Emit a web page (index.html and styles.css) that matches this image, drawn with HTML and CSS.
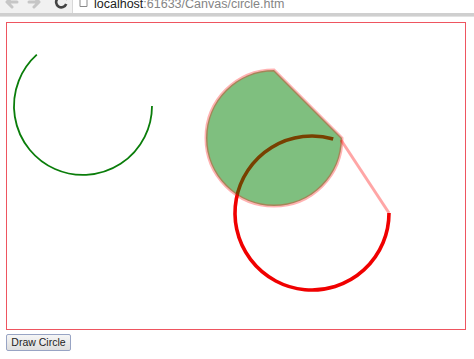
FILE: index.html
```html
<!DOCTYPE html>
<html>
<head>
<meta charset="utf-8">
<link rel="stylesheet" href="styles.css">
</head>
<body>
<div class="chrome">
  <div class="nav">
    <svg class="ico back" width="14" height="20" viewBox="0 0 14 20"><path d="M12 9 H4 M7 4 L2 9 L7 14" fill="none" stroke="#c6c6c6" stroke-width="3" stroke-linecap="round" stroke-linejoin="round"/></svg>
    <svg class="ico fwd" width="14" height="20" viewBox="0 0 14 20"><path d="M2 9 H10 M7 4 L12 9 L7 14" fill="none" stroke="#c6c6c6" stroke-width="3" stroke-linecap="round" stroke-linejoin="round"/></svg>
    <svg class="ico reload" width="14" height="20" viewBox="0 0 14 20"><path d="M11.5 6 A5.2 5.2 0 1 0 12.2 11" fill="none" stroke="#444" stroke-width="2.6"/><path d="M9 2.5 L13.2 3 L12.7 7.5 Z" fill="#444"/></svg>
  </div>
  <div class="address">
    <svg class="doc" width="9" height="20" viewBox="0 0 9 20"><path d="M1 4 H5.5 L8 6.5 V13.5 H1 Z" fill="#fff" stroke="#8a8a8a" stroke-width="1"/></svg>
    <span class="host">localhost</span><span class="rest">:61633/Canvas/circle.htm</span>
  </div>
</div>
<div class="page">
  <div class="canvas">
    <svg width="458" height="306" viewBox="0 0 458 306">
      <g transform="translate(-7 -23)">
        <path d="M152 106 A69 69 0 1 1 36.8 54.7" fill="none" stroke="#0a7d0a" stroke-width="1.8"/>
        <path d="M389 213 A77 77 0 1 1 333.2 139" fill="none" stroke="#f00000" stroke-width="3.6"/>
        <path d="M342 138 A68 68 0 1 1 274 70 Z" fill="rgba(0,128,0,0.5)" stroke="rgba(255,0,0,0.3)" stroke-width="3"/>
        <path d="M341 140 L389 213" fill="none" stroke="rgba(255,0,0,0.35)" stroke-width="3"/>
      </g>
    </svg>
  </div>
  <div class="actions">
    <button class="btn">Draw Circle</button>
  </div>
</div>
</body>
</html>
```
FILE: styles.css
```css
html, body {
  margin: 0;
  padding: 0;
  background: #fff;
}
.chrome {
  height: 13px;
  display: flex;
  align-items: flex-end;
  overflow: hidden;
  background: #f1f1f1;
  border-bottom: 3px solid #cfcfcf;
  box-shadow: 0 1px 0 #e2e2e2;
}
.nav {
  display: flex;
  align-items: flex-end;
  gap: 8px;
  padding-left: 5px;
  width: 67px;
  height: 20px;
  flex: none;
}
.ico {
  display: block;
  flex: none;
}
.reload {
  margin-left: 5px;
}
.address {
  flex: 1;
  height: 20px;
  display: flex;
  align-items: flex-end;
  background: #fff;
  border-left: 1px solid #d8d8d8;
  padding-left: 6px;
  font-family: "Liberation Sans", Arial, sans-serif;
  font-size: 12.5px;
  line-height: 18px;
  white-space: nowrap;
}
.doc {
  display: block;
  flex: none;
  margin-right: 6px;
  align-self: flex-end;
}
.host {
  color: #222;
}
.rest {
  color: #858585;
}
.page {
  padding: 6px 6px 0 6px;
  display: flex;
  flex-direction: column;
  align-items: flex-start;
  gap: 2px;
}
.canvas {
  width: 458px;
  height: 306px;
  border: 1px solid #ee5560;
}
.canvas svg {
  display: block;
}
.btn {
  height: 17px;
  width: 65px;
  padding: 0;
  margin: 0;
  font-family: "Liberation Sans", Arial, sans-serif;
  font-size: 10.5px;
  color: #222;
  background: linear-gradient(#f6f6f6, #dedede);
  border: 1px solid #98a4c4;
  border-radius: 2px;
}
```
